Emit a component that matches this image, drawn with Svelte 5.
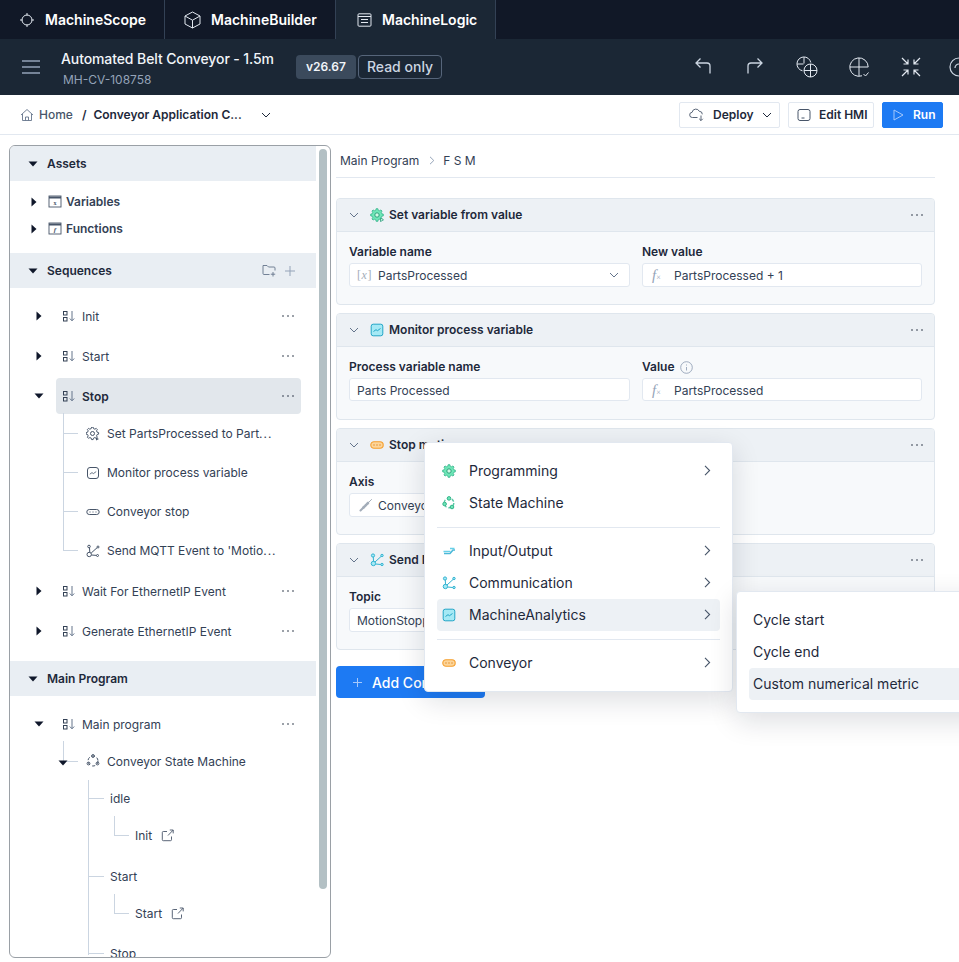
<script>
  function gear(cx, cy, r1, r2, n) {
    const pts = [];
    const step = (Math.PI * 2) / n;
    for (let i = 0; i < n; i++) {
      const a = i * step;
      [[-0.3, r1], [-0.16, r2], [0.16, r2], [0.3, r1]].forEach(([d, r]) => {
        const t = a + d * step;
        pts.push((cx + r * Math.cos(t)).toFixed(2) + ',' + (cy + r * Math.sin(t)).toFixed(2));
      });
    }
    return pts.join(' ');
  }
  const gearOutline = gear(7, 7, 5, 6.4, 8);

  const seqTop = [
    { label: 'Init', top: 0 },
    { label: 'Start', top: 0 }
  ];
  const stopKids = [
    { label: 'Set PartsProcessed to Part', more: true, icon: 'gear' },
    { label: 'Monitor process variable', icon: 'chart' },
    { label: 'Conveyor stop', icon: 'belt' },
    { label: "Send MQTT Event to 'Motio", more: true, icon: 'net' }
  ];
  const menuA = [
    { label: 'Programming', icon: 'gear', arrow: true },
    { label: 'State Machine', icon: 'fsm', arrow: false }
  ];
  const menuB = [
    { label: 'Input/Output', icon: 'io', arrow: true },
    { label: 'Communication', icon: 'net', arrow: true },
    { label: 'MachineAnalytics', icon: 'chart', arrow: true, active: true }
  ];
</script>

{#snippet caretD()}
  <svg class="caret" width="10" height="6" viewBox="0 0 10 6"><path d="M0.5 0.5h9L5 5.5z" fill="#0f172a" /></svg>
{/snippet}
{#snippet caretR()}
  <svg class="caret" width="6" height="10" viewBox="0 0 6 10"><path d="M0.5 0.5v9L5.5 5z" fill="#0f172a" /></svg>
{/snippet}
{#snippet seq()}
  <svg class="ic" width="14" height="12" viewBox="0 0 14 12" fill="none" stroke="#334155" stroke-width="1">
    <rect x="1.5" y="1.5" width="3.5" height="3.5" /><rect x="1.5" y="7.5" width="3.5" height="3.5" />
    <path d="M10 1v9.5M7.8 8.5L10 10.8l2.2-2.3" stroke="#64748b" />
  </svg>
{/snippet}
{#snippet dots()}
  <svg class="dots" width="14" height="4" viewBox="0 0 14 4"><circle cx="2" cy="2" r=".8" fill="#1e293b" /><circle cx="7" cy="2" r=".8" fill="#1e293b" /><circle cx="12" cy="2" r=".8" fill="#1e293b" /></svg>
{/snippet}
{#snippet chevD(c)}
  <svg width="10" height="6" viewBox="0 0 10 6" fill="none" stroke={c} stroke-width="1"><path d="M1 1l4 4 4-4" /></svg>
{/snippet}
{#snippet chevR()}
  <svg class="go" width="7" height="11" viewBox="0 0 7 11" fill="none" stroke="#475569" stroke-width="1.1"><path d="M1 .8l4.6 4.7L1 10.2" /></svg>
{/snippet}
{#snippet outlineIcon(kind)}
  <svg class="ic" width="14" height="14" viewBox="0 0 14 14" fill="none" stroke="#475569" stroke-width="1">
    {#if kind === 'gear'}
      <polygon points={gearOutline} transform="translate(-.5 -.5) scale(.98)" />
      <circle cx="6.5" cy="6.5" r="2" /><path d="M10 10.5l3 1.5-3 1.5z" fill="#475569" stroke="none" />
    {:else if kind === 'chart'}
      <rect x="1.5" y="1.5" width="11" height="11" rx="2.5" /><path d="M3.8 8.2l2.2-1.6 1.4 1 2.8-2" stroke-width=".8" />
    {:else if kind === 'belt'}
      <rect x=".8" y="4.5" width="12.4" height="5" rx="2.5" /><path d="M3.5 7h1M6.5 7h1M9.5 7h1" />
    {:else if kind === 'net'}
      <circle cx="3" cy="2.5" r="1.3" /><circle cx="12" cy="3" r="1" /><circle cx="3.2" cy="10.5" r="2.2" /><circle cx="11.5" cy="11.5" r="1" /><path d="M3.5 4l.3 4.5M5.2 9l5.8-5.2M5.4 11l5 .4" />
    {:else if kind === 'fsm'}
      <circle cx="7" cy="7" r="5" stroke-dasharray="3.2 2.2" /><circle cx="7" cy="2" r="1.4" /><circle cx="2.5" cy="9.5" r="1.4" /><circle cx="11.5" cy="9.5" r="1.4" />
    {/if}
  </svg>
{/snippet}
{#snippet colorIcon(kind)}
  <svg class="ic" width="14" height="14" viewBox="0 0 14 14" fill="none">
    {#if kind === 'gear' || kind === 'gearplay'}
      <polygon points={gearOutline} fill="#6ee7b7" stroke="#34b38a" stroke-width=".8" />
      <circle cx="7" cy="7" r="2.2" fill="#d1fae5" stroke="#2f9e7c" />
      {#if kind === 'gearplay'}<path d="M10.5 10l3 1.8-3 1.8z" fill="#d1fae5" stroke="#2f9e7c" stroke-width=".8" />{/if}
    {:else if kind === 'fsm'}
      <circle cx="7" cy="7" r="4.8" stroke="#57c7a4" stroke-width="1.4" stroke-dasharray="3 2" />
      <circle cx="7" cy="2.4" r="1.8" fill="#6ee7b7" stroke="#34b38a" /><circle cx="2.6" cy="8" r="1.8" fill="#6ee7b7" stroke="#34b38a" /><circle cx="10" cy="11" r="1.8" fill="#6ee7b7" stroke="#34b38a" />
    {:else if kind === 'io'}
      <path d="M2 9.5h6l3-3.5h2" stroke="#4bb8d8" stroke-width="1.6" /><path d="M1.5 7.5l7-.2M8 4.5h4.5" stroke="#67d0e8" stroke-width="1.3" />
    {:else if kind === 'net'}
      <circle cx="3" cy="2.5" r="1.6" fill="#a5e9f5" stroke="#32b3d1" /><circle cx="12" cy="2.5" r="1.2" fill="#a5e9f5" stroke="#32b3d1" /><circle cx="3.4" cy="10.5" r="2.2" fill="#a5e9f5" stroke="#32b3d1" /><circle cx="12" cy="11.5" r="1.2" fill="#a5e9f5" stroke="#32b3d1" />
      <path d="M3.3 4l.2 4.5M5 9l6-5.5M5.6 11l5.2.5" stroke="#32b3d1" />
    {:else if kind === 'chart'}
      <rect x="1.2" y="1.2" width="11.6" height="11.6" rx="2" fill="#a5e9f5" stroke="#22a6c7" /><path d="M3.5 8.5l2.5-1.8 1.5 1 3-2.2" stroke="#22a6c7" />
    {:else if kind === 'belt'}
      <rect x=".8" y="3.8" width="12.4" height="6.4" rx="3.2" fill="#fcd59a" stroke="#f59e2c" stroke-width="1.1" /><path d="M3.4 7h1.2M6.4 7h1.2M9.4 7h1.2" stroke="#d97706" stroke-width="1.1" />
    {/if}
  </svg>
{/snippet}
{#snippet fx()}
  <span class="fx"><i>f</i><small>×</small></span>
{/snippet}
{#snippet leaf(label, kind, more)}
  <div class="kid"><span class="ico-slot">{@render outlineIcon(kind)}</span><span>{label}{#if more}<span class="ell">...</span>{/if}</span></div>
{/snippet}
{#snippet extLink()}
  <svg class="ext" width="13" height="13" viewBox="0 0 13 13" fill="none" stroke="#475569" stroke-width=".9"><path d="M6 2.5H2.3a1 1 0 00-1 1v7.2a1 1 0 001 1h7.2a1 1 0 001-1V7.5M7 6.5L12 1.2M8.8 1h3.4v3.4" /></svg>
{/snippet}
{#snippet cardHead(title, kind)}
  <div class="card-head">
    <span class="chev">{@render chevD('#64748b')}</span>
    <span class="ico-head">{@render colorIcon(kind)}</span>
    <span class="card-title">{title}</span>
    {@render dots()}
  </div>
{/snippet}

<div class="page">
  <nav class="tabs">
    <div class="tab t1">
      <svg width="14" height="14" viewBox="0 0 14 14" fill="none" stroke="#e2e8f0" stroke-width="1"><circle cx="7" cy="7" r="5" /><path d="M7 0v2.5M7 11.5V14M0 7h2.5M11.5 7H14" /></svg>
      <span>MachineScope</span>
    </div>
    <div class="tab t2">
      <svg width="17" height="18" viewBox="0 0 17 18" fill="none" stroke="#e2e8f0" stroke-width="1"><path d="M8.5 1L16 5v8l-7.5 4L1 13V5zM1 5l7.5 4.2L16 5M8.5 9.2V17" /></svg>
      <span>MachineBuilder</span>
    </div>
    <div class="tab t3">
      <svg width="15" height="14" viewBox="0 0 15 14" fill="none" stroke="#e2e8f0" stroke-width="1"><rect x="1" y=".8" width="13" height="12.4" rx="1" /><path d="M1 3.5h13M4 6.5h7M4 9.5h7" /></svg>
      <span>MachineLogic</span>
    </div>
  </nav>

  <header class="bar">
    <svg class="burger" width="18" height="14" viewBox="0 0 18 14" stroke="#94a3b8" stroke-width="1.5"><path d="M0 1h18M0 7h18M0 13h18" /></svg>
    <div class="title">
      <div class="name">Automated Belt Conveyor - 1.5m</div>
      <div class="sub">MH-CV-108758</div>
    </div>
    <span class="ver">v26.67</span>
    <span class="ro">Read only</span>
    <div class="tools">
      <svg width="18" height="18" viewBox="0 0 18 18" fill="none" stroke="#cbd5e1" stroke-width="1.3"><path d="M16 16.5V9a3 3 0 00-3-3H2.5M6.5 1.5L2 6l4.5 4.5" transform="translate(0 -1)" /></svg>
      <svg width="18" height="18" viewBox="0 0 18 18" fill="none" stroke="#cbd5e1" stroke-width="1.3"><path d="M2 16.5V9a3 3 0 013-3h10.5M11.5 1.5L16 6l-4.5 4.5" transform="translate(0 -1)" /></svg>
      <svg width="22" height="22" viewBox="0 0 22 22" fill="none" stroke="#e2e8f0" stroke-width="1"><path d="M6.5 14.8A7 7 0 1114.8 6.5M8 1v6.5M1 8h6.5" /><circle cx="14.5" cy="14.5" r="6.5" /><path d="M14.5 8v13M8 14.5h13" /></svg>
      <svg width="22" height="22" viewBox="0 0 22 22" fill="none" stroke="#e2e8f0" stroke-width="1"><path d="M14 19.8A9.2 9.2 0 1120.2 11M11 1.8v18.4M1.8 11h18.4" /><path d="M15.5 18l2 2 3-3.5" /></svg>
      <svg width="20" height="20" viewBox="0 0 20 20" fill="none" stroke="#e2e8f0" stroke-width="1.2"><path d="M1 1l6 6M7 2.5V7H2.5M19 1l-6 6M13 2.5V7h4.5M1 19l6-6M7 17.5V13H2.5M19 19l-6-6M13 17.5V13h4.5" /></svg>
      <svg width="20" height="20" viewBox="0 0 20 20" fill="none" stroke="#cbd5e1" stroke-width="1.2"><circle cx="10" cy="10" r="9" /><path d="M6 11a4 4 0 014-4" /></svg>
    </div>
  </header>

  <div class="crumbbar">
    <svg width="14" height="14" viewBox="0 0 14 14" fill="none" stroke="#64748b" stroke-width=".9"><path d="M1 7l6-5.5L13 7M2.5 6v6.5h9V6M5.5 12.5V9h3v3.5" /></svg>
    <span class="home">Home</span>
    <b class="slash">/</b>
    <b class="app">Conveyor Application C...</b>
    <span class="app-chev">{@render chevD('#1e293b')}</span>
    <div class="actions">
      <button class="btn deploy">
        <svg width="16" height="13" viewBox="0 0 16 13" fill="none" stroke="#475569" stroke-width=".9"><path d="M8.5 9.5H3.5a2.6 2.6 0 01-.4-5.2 3.8 3.8 0 017.2-1 3 3 0 013 3M12 7.5v5M10.2 10.8l1.8 1.8 1.8-1.8" /></svg>
        Deploy {@render chevD('#1e293b')}
      </button>
      <button class="btn hmi">
        <svg width="14" height="14" viewBox="0 0 14 14" fill="none" stroke="#475569" stroke-width="1"><rect x="1" y="1.5" width="12" height="11" rx="2" /><path d="M4.5 10h3" /></svg>
        Edit HMI
      </button>
      <button class="btn run">
        <svg width="11" height="12" viewBox="0 0 11 12" fill="none" stroke="#a5c8fb" stroke-width="1"><path d="M1 1v10l9-5z" /></svg>
        Run
      </button>
    </div>
  </div>

  <div class="body">
    <aside class="side">
      <div class="tree">
        <div class="group"><span class="gc">{@render caretD()}</span>Assets</div>
        <div class="assets">
          <div class="asset">{@render caretR()}
            <svg width="14" height="13" viewBox="0 0 14 13" fill="none" stroke="#475569" stroke-width=".9"><rect x="1" y="1" width="12" height="11" /><path d="M1 2.5h12" stroke-width="2" /><text x="7" y="10" font-size="6" text-anchor="middle" fill="#475569" stroke="none" font-family="Liberation Serif">x</text></svg>
            Variables</div>
          <div class="asset">{@render caretR()}
            <svg width="14" height="13" viewBox="0 0 14 13" fill="none" stroke="#475569" stroke-width=".9"><rect x="1" y="1" width="12" height="11" /><path d="M1 2.5h12" stroke-width="2" /><text x="7" y="10" font-size="7" text-anchor="middle" fill="#475569" stroke="none" font-style="italic" font-family="Liberation Serif">f</text></svg>
            Functions</div>
        </div>

        <div class="group seqh">
          <span class="gc">{@render caretD()}</span>Sequences
          <span class="gactions">
            <svg width="14" height="13" viewBox="0 0 14 13" fill="none" stroke="#64748b" stroke-width=".9"><path d="M7.5 10.5H2a1 1 0 01-1-1V1.5h4L6.5 3H12a1 1 0 011 1v2.5M11 8v4.5M8.8 10.2h4.4" /></svg>
            <svg width="10" height="10" viewBox="0 0 10 10" stroke="#94a3b8" stroke-width="1"><path d="M5 0v10M0 5h10" /></svg>
          </span>
        </div>
        <div class="seqs">
          {#each seqTop as s}
            <div class="row"><span class="rc">{@render caretR()}</span><span class="rowpill">{@render seq()}<span class="rowlabel">{s.label}</span>{@render dots()}</span></div>
          {/each}
          <div class="row"><span class="rc">{@render caretD()}</span><span class="rowpill sel">{@render seq()}<b class="rowlabel">Stop</b>{@render dots()}</span></div>
          <div class="kids">
            {#each stopKids as k}
              {@render leaf(k.label, k.icon, k.more)}
            {/each}
          </div>
          <div class="row after-kids"><span class="rc">{@render caretR()}</span><span class="rowpill">{@render seq()}<span class="rowlabel">Wait For EthernetIP Event</span>{@render dots()}</span></div>
          <div class="row"><span class="rc">{@render caretR()}</span><span class="rowpill">{@render seq()}<span class="rowlabel">Generate EthernetIP Event</span>{@render dots()}</span></div>
        </div>

        <div class="group mainh"><span class="gc">{@render caretD()}</span>Main Program</div>
        <div class="row mainrow"><span class="rc">{@render caretD()}</span><span class="rowpill">{@render seq()}<span class="rowlabel">Main program</span>{@render dots()}</span></div>
        <div class="kids fsm">
          <div class="kid">
            <span class="kid-caret">{@render caretD()}</span>
            <span class="ico-slot">{@render outlineIcon('fsm')}</span><span>Conveyor State Machine</span>
          </div>
        </div>
        <div class="states">
          <div class="st">idle</div>
          <div class="sub-st">Init {@render extLink()}</div>
          <div class="st gap">Start</div>
          <div class="sub-st">Start {@render extLink()}</div>
          <div class="st gap last">Stop</div>
        </div>
      </div>
      <div class="track"><div class="thumb"></div></div>
    </aside>

    <main class="main">
      <div class="path"><span>Main Program</span>
        <svg width="6" height="9" viewBox="0 0 6 9" fill="none" stroke="#94a3b8" stroke-width="1"><path d="M1 .8l3.8 3.7L1 8.2" /></svg>
        <span class="fsmname">F S M</span></div>

      <section class="card">
        {@render cardHead('Set variable from value', 'gearplay')}
        <div class="fields">
          <div class="field"><label for="f1">Variable name</label>
            <div id="f1" class="input"><span class="vx">[<i>x</i>]</span><span class="val">PartsProcessed</span><span class="sel-chev">{@render chevD('#64748b')}</span></div></div>
          <div class="field"><label for="f2">New value</label>
            <div id="f2" class="input">{@render fx()}<span class="val">PartsProcessed + 1</span></div></div>
        </div>
      </section>

      <section class="card c2">
        {@render cardHead('Monitor process variable', 'chart')}
        <div class="fields">
          <div class="field"><label for="f3">Process variable name</label>
            <div id="f3" class="input"><span>Parts Processed</span></div></div>
          <div class="field"><label for="f4">Value
            <svg class="info" width="13" height="13" viewBox="0 0 13 13" fill="none" stroke="#94a3b8" stroke-width=".9"><circle cx="6.5" cy="6.5" r="5.8" /><path d="M6.5 6v3.5M6.5 3.5v1" /></svg></label>
            <div id="f4" class="input">{@render fx()}<span class="val">PartsProcessed</span></div></div>
        </div>
      </section>

      <section class="card">
        {@render cardHead('Stop motion', 'belt')}
        <div class="fields">
          <div class="field"><label for="f5">Axis</label>
            <div id="f5" class="input">
              <svg class="link" width="14" height="14" viewBox="0 0 14 14" fill="none" stroke="#a3adb9" stroke-linecap="round"><path d="M1.5 12.5l3-3" stroke-width="2" /><path d="M9.5 4.5l3-3" stroke-width="1" /><path d="M4.5 9.5l5-5" stroke-width="2.6" stroke-dasharray="1.6 .8" /></svg>
              <span class="val axisval">Conveyor</span></div></div>
        </div>
      </section>

      <section class="card">
        {@render cardHead('Send MQTT Event', 'net')}
        <div class="fields">
          <div class="field"><label for="f6">Topic</label>
            <div id="f6" class="input"><span>MotionStopped</span></div></div>
        </div>
      </section>

      <button class="add">
        <svg width="9" height="9" viewBox="0 0 9 9" stroke="#a5c8fb" stroke-width="1"><path d="M4.5 0v9M0 4.5h9" /></svg>
        Add Conveyor
      </button>
    </main>
  </div>

  <div class="menu m1">
    {#each menuA as m}
      <div class="item"><span class="mi">{@render colorIcon(m.icon)}</span><span class="ml">{m.label}</span>{#if m.arrow}{@render chevR()}{/if}</div>
    {/each}
    <hr />
    {#each menuB as m}
      <div class="item" class:on={m.active}><span class="mi">{@render colorIcon(m.icon)}</span><span class="ml">{m.label}</span>{@render chevR()}</div>
    {/each}
    <hr />
    <div class="item"><span class="mi">{@render colorIcon('belt')}</span><span class="ml">Conveyor</span>{@render chevR()}</div>
  </div>

  <div class="menu m2">
    <div class="item plain">Cycle start</div>
    <div class="item plain">Cycle end</div>
    <div class="item plain on">Custom numerical metric</div>
  </div>
</div>

<style>
  :global(body) { margin: 0; background: #fff; }
  .page {
    position: relative; width: 959px; height: 962px; overflow: hidden;
    font-family: Inter, "Liberation Sans", sans-serif; font-size: 12px; color: #1e293b;
    display: flex; flex-direction: column;
  }
  .tabs { height: 39px; flex: none; background: #111827; display: flex; color: #fff; font-size: 14px; font-weight: 600; }
  .tab { display: flex; align-items: center; box-sizing: border-box; height: 39px; }
  .t1 { width: 165px; padding-left: 20px; gap: 11px; border-right: 1px solid #334155; }
  .t2 { width: 171px; padding-left: 19px; gap: 10px; border-right: 1px solid #334155; }
  .t3 { width: 160px; padding-left: 21px; gap: 10px; background: #1b2735; border-right: 1px solid #334155; }

  .bar { height: 56px; flex: none; background: #1b2735; display: flex; align-items: center; color: #fff; }
  .burger { margin-left: 22px; flex: none; }
  .title { margin-left: 21px; width: 235px; flex: none; align-self: flex-start; padding-top: 11px; }
  .name { font-size: 14px; font-weight: 500; color: #f1f5f9; line-height: 17px; letter-spacing: -0.1px; }
  .sub { font-size: 12px; color: #94a3b8; line-height: 15px; margin: 5px 0 0 2px; }
  .ver { flex: none; height: 24px; box-sizing: border-box; width: 60px; text-align: center; line-height: 24px; background: #3b4a5c; border-radius: 4px; font-weight: 600; font-size: 12px; color: #f1f5f9; }
  .ro { flex: none; margin-left: 2px; height: 24px; box-sizing: border-box; width: 84px; text-align: center; line-height: 22px; border: 1px solid #56657a; border-radius: 4px; font-size: 14px; font-weight: 500; color: #cbd5e1; }
  .tools { flex: none; margin-left: 252px; display: flex; align-items: center; gap: 34px; }
  .tools svg { flex: none; }
  .tools svg:nth-child(3), .tools svg:nth-child(4) { margin: 0 -2px; }
  .tools svg:nth-child(5) { margin-left: -1px; }
  .tools svg:nth-child(6) { margin-left: -6px; }

  .crumbbar { height: 40px; flex: none; box-sizing: border-box; border-bottom: 1px solid #e2e8f0; display: flex; align-items: center; padding-left: 20px; }
  .home { margin-left: 5px; color: #475569; font-weight: 500; }
  .slash { margin-left: 9px; color: #1e293b; font-weight: 600; }
  .app { margin-left: 7px; font-weight: 600; color: #1e293b; width: 168px; flex: none; white-space: nowrap; }
  .app-chev { display: flex; }
  .actions { margin-left: auto; margin-right: 16px; display: flex; gap: 8px; }
  .btn { height: 26px; box-sizing: border-box; border: 1px solid #e2e8f0; background: #fff; border-radius: 2px; font: 600 12px Inter, "Liberation Sans", sans-serif; color: #1e293b; display: flex; align-items: center; padding: 0; }
  .deploy { width: 101px; padding-left: 9px; gap: 8px; }
  .deploy svg:last-child { margin-left: 0; }
  .hmi { width: 86px; padding-left: 8px; gap: 8px; }
  .run { width: 61px; padding-left: 10px; gap: 9px; background: #1d7af3; border-color: #1d7af3; color: #fff; }

  .body { flex: 1; display: flex; min-height: 0; }
  .side { flex: none; box-sizing: border-box; width: 322px; height: 813px; margin: 10px 0 0 9px; border: 1px solid #9aa0a6; border-radius: 6px; display: flex; overflow: hidden; }
  .tree { width: 306px; flex: none; overflow: hidden; }
  .track { flex: none; padding: 3px 0 0 3px; }
  .thumb { width: 8px; height: 740px; background: #b3c0c4; border-radius: 4px; }
  .group { height: 35px; background: #e9eef3; display: flex; align-items: center; font-weight: 600; color: #1e293b; }
  .gc { width: 37px; display: flex; padding-left: 18px; box-sizing: border-box; }
  .seqh { margin-top: 11px; padding-right: 21px; }
  .gactions { margin-left: auto; display: flex; align-items: center; gap: 9px; }
  .assets { padding-top: 7px; }
  .asset { height: 27px; display: flex; align-items: center; font-weight: 600; color: #334155; padding-left: 21px; }
  .asset svg:nth-child(2) { margin: 0 4px 0 11px; }
  .seqs { padding-top: 10px; }
  .row { height: 36px; display: flex; align-items: center; }
  .row + .row { margin-top: 4px; }
  .rc { width: 46px; flex: none; display: flex; justify-content: center; padding-left: 14px; box-sizing: border-box; padding-right: 2px; }
  .rowpill { width: 245px; height: 36px; box-sizing: border-box; display: flex; align-items: center; border-radius: 4px; padding: 0 6px; }
  .rowpill.sel { background: #e2e7ec; }
  .rowpill .ic { flex: none; }
  .rowlabel { margin-left: 6px; flex: 1; color: #334155; font-weight: 400; }
  b.rowlabel { font-weight: 600; color: #1e293b; }
  .row .dots { flex: none; margin-right: 0; }
  .kids { margin-left: 53px; }
  .kid { position: relative; height: 39px; display: flex; align-items: center; padding-left: 23px; color: #334155; white-space: nowrap; }
  .kid::before { content: ""; position: absolute; left: 0; top: -1px; bottom: 0; border-left: 1px solid #cbd5e1; }
  .kid:last-child::before { bottom: 19px; }
  .kid::after { content: ""; position: absolute; left: 0; width: 15px; top: 19px; border-top: 1px solid #cbd5e1; }
  .ico-slot { width: 21px; display: flex; flex: none; }
  .ell { letter-spacing: 1px; }
  .after-kids { margin-top: 3px; }
  .mainh { margin-top: 12px; }
  .mainrow { margin-top: 10px; }
  .fsm .kid { height: 38px; }
  .kid-caret { position: absolute; left: -5px; top: 18px; display: flex; z-index: 1; }
  .states { margin: 0 0 0 78px; height: 175px; border-left: 1px solid #cbd5e1; color: #334155; }
  .st { position: relative; height: 37px; line-height: 37px; padding-left: 21px; }
  .st::before { content: ""; position: absolute; left: 0; top: 18px; width: 15px; border-top: 1px solid #cbd5e1; }
  .st.gap { margin-top: 4px; }
  .st.last { margin-top: 3px; }
  .st.last::before { top: 18px; }
  .sub-st { position: relative; height: 37px; line-height: 37px; margin-left: 25px; padding-left: 21px; display: flex; align-items: center; gap: 9px; }
  .sub-st::before { content: ""; position: absolute; left: 0; top: -1px; width: 14px; height: 19px; border-left: 1px solid #cbd5e1; border-bottom: 1px solid #cbd5e1; }

  .main { position: relative; flex: none; box-sizing: border-box; width: 599px; margin-left: 5px; padding-top: 11px; display: flex; flex-direction: column; }
  .path { height: 32px; box-sizing: border-box; border-bottom: 1px solid #e2e8f0; display: flex; align-items: center; gap: 10px; padding: 0 0 2px 4px; color: #334155; }
  .fsmname { margin-left: -2px; }
  .card { margin-top: 8px; height: 107px; box-sizing: border-box; border: 1px solid #dfe6ed; border-radius: 4px; background: #f7f9fb; overflow: hidden; }
  .path + .card { margin-top: 20px; }
  .card-head { height: 33px; box-sizing: border-box; background: #edf1f5; border-bottom: 1px solid #dfe6ed; display: flex; align-items: center; padding-right: 10px; padding-bottom: 1px; }
  .chev { width: 33px; padding-left: 12px; box-sizing: border-box; display: flex; }
  .ico-head { display: flex; width: 19px; }
  .card-title { flex: 1; font-weight: 600; color: #1e293b; }
  .fields { display: grid; grid-template-columns: 281px 280px; gap: 12px; padding: 13px 12px 0 12px; }
  label { display: flex; align-items: center; gap: 5px; height: 14px; line-height: 14px; font-weight: 600; color: #1e293b; margin-bottom: 4px; margin-top: 0; }
  .input { height: 24px; box-sizing: border-box; background: #fff; border: 1px solid #e2e8f0; border-radius: 3px; display: flex; align-items: center; padding-left: 7px; color: #334155; white-space: nowrap; overflow: hidden; }
  .c2 .input { margin-top: 1px; height: 23px; padding-top: 1px; }
  .val { margin-left: 9px; }
  .axisval { margin-left: 5px; }
  .vx { font-family: "Liberation Serif", serif; color: #a3adb9; width: 12px; font-size: 12px; margin-right: 0; white-space: nowrap; letter-spacing: 0.6px; }
  .sel-chev { margin-left: auto; margin-right: 10px; display: flex; }
  .fx { font-family: "Liberation Serif", serif; color: #94a3b8; width: 13px; margin-left: 2px; font-size: 15px; line-height: 1; white-space: nowrap; flex: none; }
  .fx small { font-size: 8px; }
  .link { flex: none; margin-left: 2px; }
  .add { margin-top: 16px; width: 149px; height: 32px; border: none; border-radius: 4px; background: #1d7af3; color: #fff; font: 500 14px Inter, "Liberation Sans", sans-serif; display: flex; align-items: center; gap: 10px; padding: 0 0 0 17px; white-space: nowrap; }

  .menu { position: absolute; box-sizing: border-box; background: #fff; border: 1px solid #e2e8f0; border-radius: 4px; padding: 12px; box-shadow: 0 8px 28px rgba(15, 23, 42, 0.14); font-size: 14px; color: #1e293b; }
  .m1 { left: 424px; top: 442px; width: 309px; height: 250px; }
  .m2 { left: 736px; top: 591px; width: 280px; height: 122px; }
  .item { height: 32px; box-sizing: border-box; display: flex; align-items: center; border-radius: 4px; padding: 0 9px 1px 5px; }
  .item.plain { padding-left: 4px; }
  .item.on { background: #edf1f5; }
  .mi { width: 27px; flex: none; display: flex; }
  .ml { flex: 1; }
  hr { border: none; border-top: 1px solid #e2e8f0; margin: 8px 0 7px; height: 0; }
</style>
